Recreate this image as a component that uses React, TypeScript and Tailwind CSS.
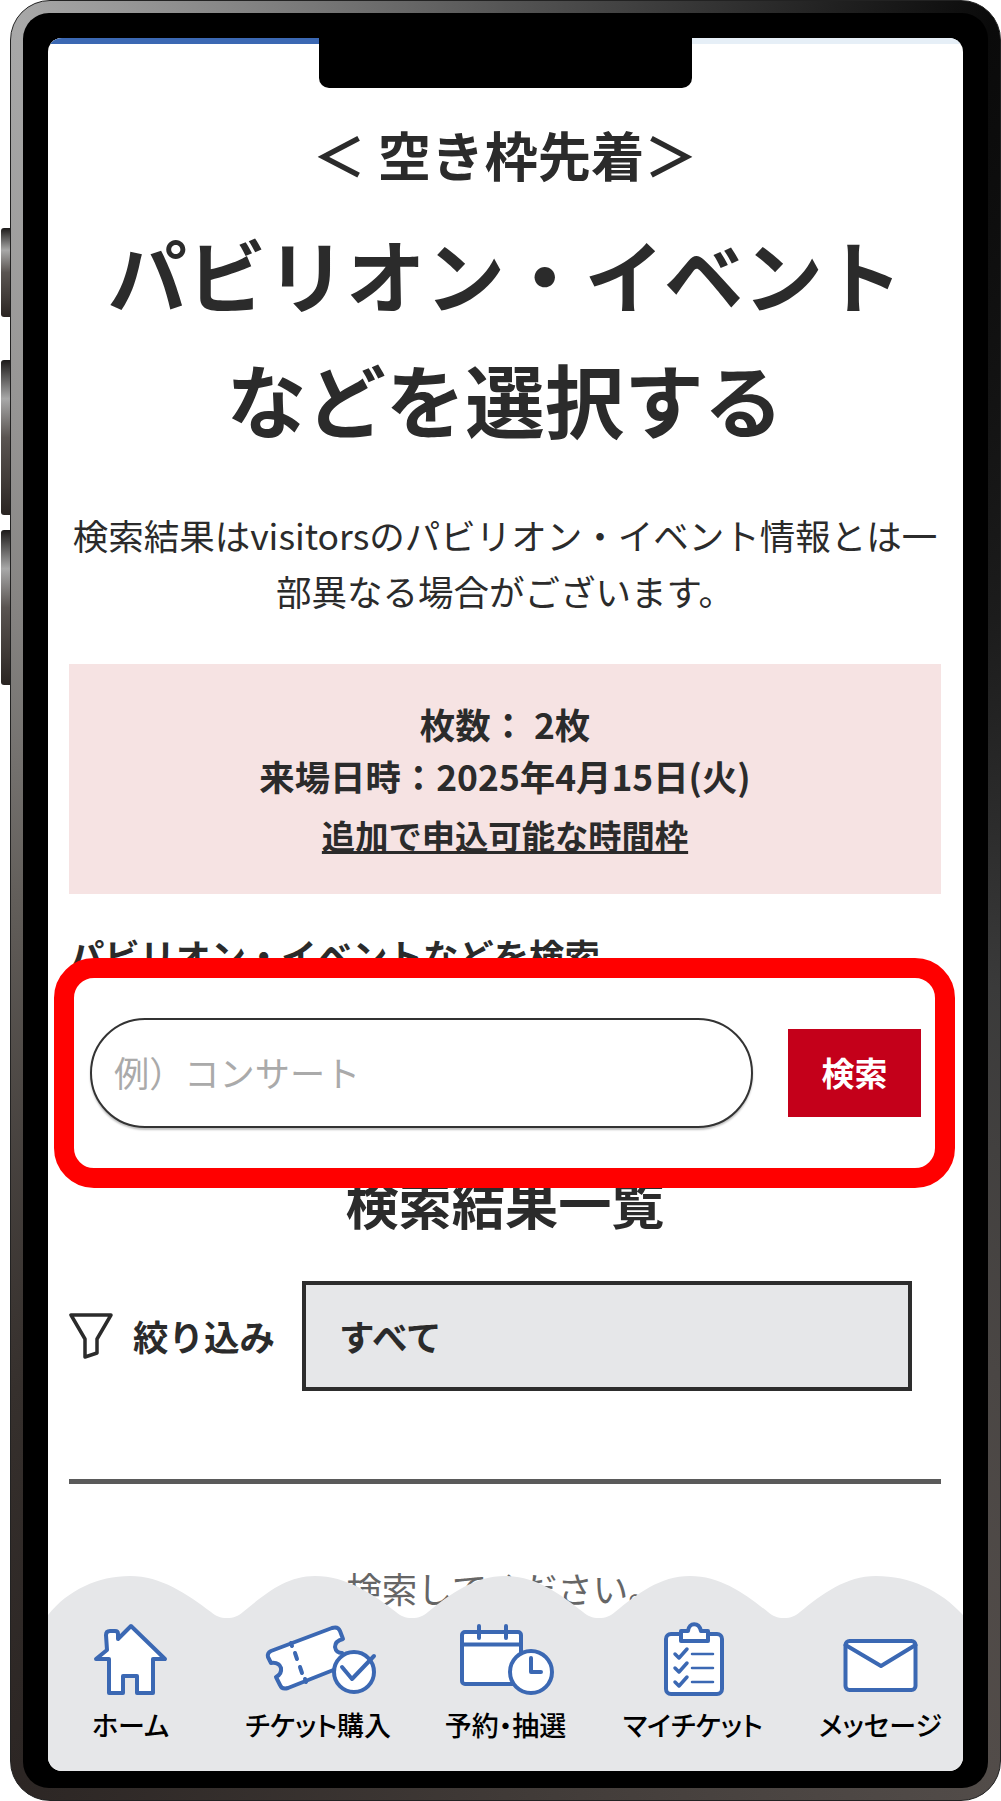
const blue = '#3b68b3';

// Bottom tab bar icons, drawn on the same grid as the reference crops
const HomeIcon = () => (
  <svg width="100" height="100" viewBox="0 0 100 100" fill="#fff" stroke={blue} strokeWidth="4" strokeLinejoin="round" strokeLinecap="round">
    <path d="M50 16 L84 49 H72 V83 H56 V66 H42 V83 H28 V49 H15 L26 40 L25 25 Q25 21 29 21 H34 Q37 21 37 24 V29 Z" />
  </svg>
);

const TicketIcon = () => (
  <svg className="ml-[5px]" width="130" height="100" viewBox="0 0 130 100" fill="#fff" stroke={blue} strokeWidth="4" strokeLinejoin="round" strokeLinecap="round">
    <path d="M15 41 L76 18 Q82 16 84 21 L87 29 Q79 31 79 37 Q80 43 86 43 L90 55 L32 78 Q26 80 24 75 L20 67 Q26 64 25 58 Q23 52 15 53 L12 47 Q11 43 15 41 Z" />
    <path d="M35 33 L36 36 M39 43 L41 49 M44 57 L46 63 M49 69 L50 72" fill="none" />
    <circle cx="98" cy="62" r="20" />
    <path d="M86 57 L96 69 L118 46" fill="none" />
  </svg>
);

const CalendarIcon = () => (
  <svg width="130" height="100" viewBox="0 0 130 100" fill="#fff" stroke={blue} strokeWidth="4" strokeLinejoin="round" strokeLinecap="round">
    <rect x="22" y="22" width="59" height="52" rx="3" />
    <path d="M22 34.5 H81 M39 16 V28 M66 16 V28" fill="none" />
    <circle cx="91" cy="62" r="21" />
    <path d="M91 48 V62 H101" fill="none" />
  </svg>
);

const ClipboardIcon = () => (
  <svg className="ml-[7px]" width="90" height="100" viewBox="0 0 90 100" fill="#fff" stroke={blue} strokeWidth="4" strokeLinejoin="round" strokeLinecap="round">
    <rect x="15" y="24" width="56" height="60" rx="5" />
    <path d="M30 31 V21 H37 C38 12 48 12 50 21 H57 V31 Z" />
    <path d="M24 44 L28 48 L36 39 M24 58 L28 62 L36 53 M24 72 L28 76 L36 67" fill="none" strokeWidth="3.5" />
    <path d="M41 44 H62 M41 58 H62 M41 72 H62" fill="none" strokeWidth="2.5" />
  </svg>
);

const MailIcon = () => (
  <svg width="100" height="100" viewBox="0 0 100 100" fill="#fff" stroke={blue} strokeWidth="4" strokeLinejoin="round" strokeLinecap="round">
    <rect x="15.5" y="31" width="70" height="49" rx="4" />
    <path d="M15.5 35 L51 56 L85.5 35" fill="none" />
  </svg>
);

const tabs = [
  { label: 'ホーム', icon: <HomeIcon /> },
  { label: 'チケット購入', icon: <TicketIcon /> },
  { label: '予約・抽選', icon: <CalendarIcon /> },
  { label: 'マイチケット', icon: <ClipboardIcon /> },
  { label: 'メッセージ', icon: <MailIcon /> },
];

const SideButton = ({ className }: { className: string }) => (
  <div className={`w-[9px] rounded-l-[3px] bg-[linear-gradient(180deg,#1c1a19_0%,#a8a8a8_25%,#5a5451_50%,#3f3936_80%,#2a2422_100%)] ${className}`} />
);

const BottomNav = () => (
  <nav className="absolute inset-x-0 bottom-0">
    <svg className="block" width="915" height="42" viewBox="0 0 915 42" fill="#e6e7e9">
      <path d="M0 39 C20 14 50 0 82 0 C113 0 139 18 163 36 C168 40 172 42 179 42 C186 42 190 40 195 36 C217 18 238 0 267 0 C298 0 325 18 348 36 C353 40 357 42 364 42 C371 42 375 40 380 36 C402 18 427 0 457 0 C488 0 512 18 535 36 C540 40 544 42 551 42 C558 42 562 40 567 36 C589 18 612 0 642 0 C673 0 697 18 720 36 C725 40 729 42 736 42 C743 42 747 40 752 36 C774 18 798 0 828 0 C862 0 892 14 915 39 V42 H0 Z" />
    </svg>
    <div className="flow-root h-[153px] bg-[#e6e7e9]">
      <div className="-mx-[11px] -mt-[8px] grid grid-cols-5">
        {tabs.map((tab) => (
          <div key={tab.label} className="flex flex-col items-center">
            {tab.icon}
            <span className="-mt-[2px] text-[27px] leading-[34px] font-medium text-black [font-feature-settings:'palt']">{tab.label}</span>
          </div>
        ))}
      </div>
    </div>
  </nav>
);

export default function App() {
  return (
    <div className="flex h-[1801px] w-[1001px] bg-white font-['Noto_Sans_CJK_JP','Noto_Sans',sans-serif] text-[#2b2b2b]">
      {/* Side buttons */}
      <div className="ml-px flex shrink-0 flex-col pt-[228px]">
        <SideButton className="h-[89px]" />
        <SideButton className="mt-[43px] h-[155px]" />
        <SideButton className="mt-[15px] h-[155px]" />
      </div>

      {/* Phone body */}
      <div className="h-[1801px] flex-1 rounded-[40px] border border-[#222] bg-[conic-gradient(#555_0deg,#0a0a0a_29deg,#1c1c1c_60deg,#3a3a3a_100deg,#524c49_151deg,#403a37_180deg,#2c2624_209deg,#36302d_225deg,#625e5a_270deg,#a8a8a8_331deg,#555_360deg)] p-[12px]">
        <div className="h-full rounded-[26px] bg-black px-[25px] pt-[25px] pb-[17px]">
          <div className="relative h-full overflow-hidden rounded-[14px] bg-white">
            {/* Progress bar */}
            <div className="h-[6px] bg-[#e6eff7]">
              <div className="h-full w-[271px] bg-[#3b68b3]" />
            </div>

            {/* Notch */}
            <div className="absolute top-0 left-[271px] z-20 h-[50px] w-[373px] rounded-b-[10px] bg-black" />

            <main className="pr-[22px] pl-[21px]">
              <h2 className="mt-[75px] text-center text-[53.3px] leading-[70px] font-bold">＜ 空き枠先着＞</h2>
              <h1 className="mt-[21px] text-center text-[79.5px] leading-[125px] font-bold">
                パビリオン・イベント
                <br />
                などを選択する
              </h1>
              <p className="mt-[47px] text-center text-[35.5px] leading-[56px]">
                検索結果はvisitorsのパビリオン・イベント情報とは一部異なる場合がございます。
              </p>

              <div className="mt-[45px] h-[230px] bg-[#f6e3e3] pt-[34px] text-center text-[35.4px] leading-[52px] font-bold">
                <div>枚数： 2枚</div>
                <div>来場日時：2025年4月15日(火)</div>
                <div className="mt-[7px] text-[33.3px] underline">追加で申込可能な時間枠</div>
              </div>

              <div className="mt-[35px] text-[35.4px] leading-[52px] font-bold">パビリオン・イベントなどを検索</div>

              {/* Highlighted search row */}
              <div className="relative z-10 -mt-[23px] -mr-[14px] -ml-[15px] flex h-[230px] items-center gap-[35px] rounded-[40px] border-[20px] border-[#ff0000] bg-white pr-[14px] pl-[16px]">
                <input
                  className="h-[110px] min-w-0 flex-1 rounded-full border-2 border-[#333] bg-white px-[22px] pb-[4px] text-[35.2px] shadow-[0_2px_2px_rgba(0,0,0,0.25)] outline-none placeholder:text-[#aaa]"
                  placeholder="例）コンサート"
                />
                <button className="h-[88px] w-[133px] bg-[#c4001a] text-[33px] font-bold text-white">検索</button>
              </div>

              <h2 className="-mt-[21px] text-center text-[53.2px] leading-[70px] font-bold">検索結果一覧</h2>

              <div className="mt-[44px] flex items-center">
                <svg className="shrink-0" width="44" height="46" viewBox="0 0 44 46" fill="none" stroke="#2b2b2b" strokeWidth="3.5" strokeLinejoin="round">
                  <path d="M2 2 H42 L28 26 V40 L16 44 V26 Z" />
                </svg>
                <span className="ml-[20px] text-[35.5px] font-bold">絞り込み</span>
                <select className="ml-[27px] h-[110px] w-[610px] appearance-none rounded-none border-4 border-[#2d2d2d] bg-[#e6e7e9] pl-[33px] text-[35.5px] font-bold outline-none">
                  <option>すべて</option>
                </select>
              </div>

              <hr className="mt-[88px] h-[5px] border-0 bg-[#5a5a5a]" />

              <p className="mt-[76px] text-center text-[35.5px] leading-[56px] text-[#666]">検索してください。</p>
            </main>

            <BottomNav />
          </div>
        </div>
      </div>
    </div>
  );
}
